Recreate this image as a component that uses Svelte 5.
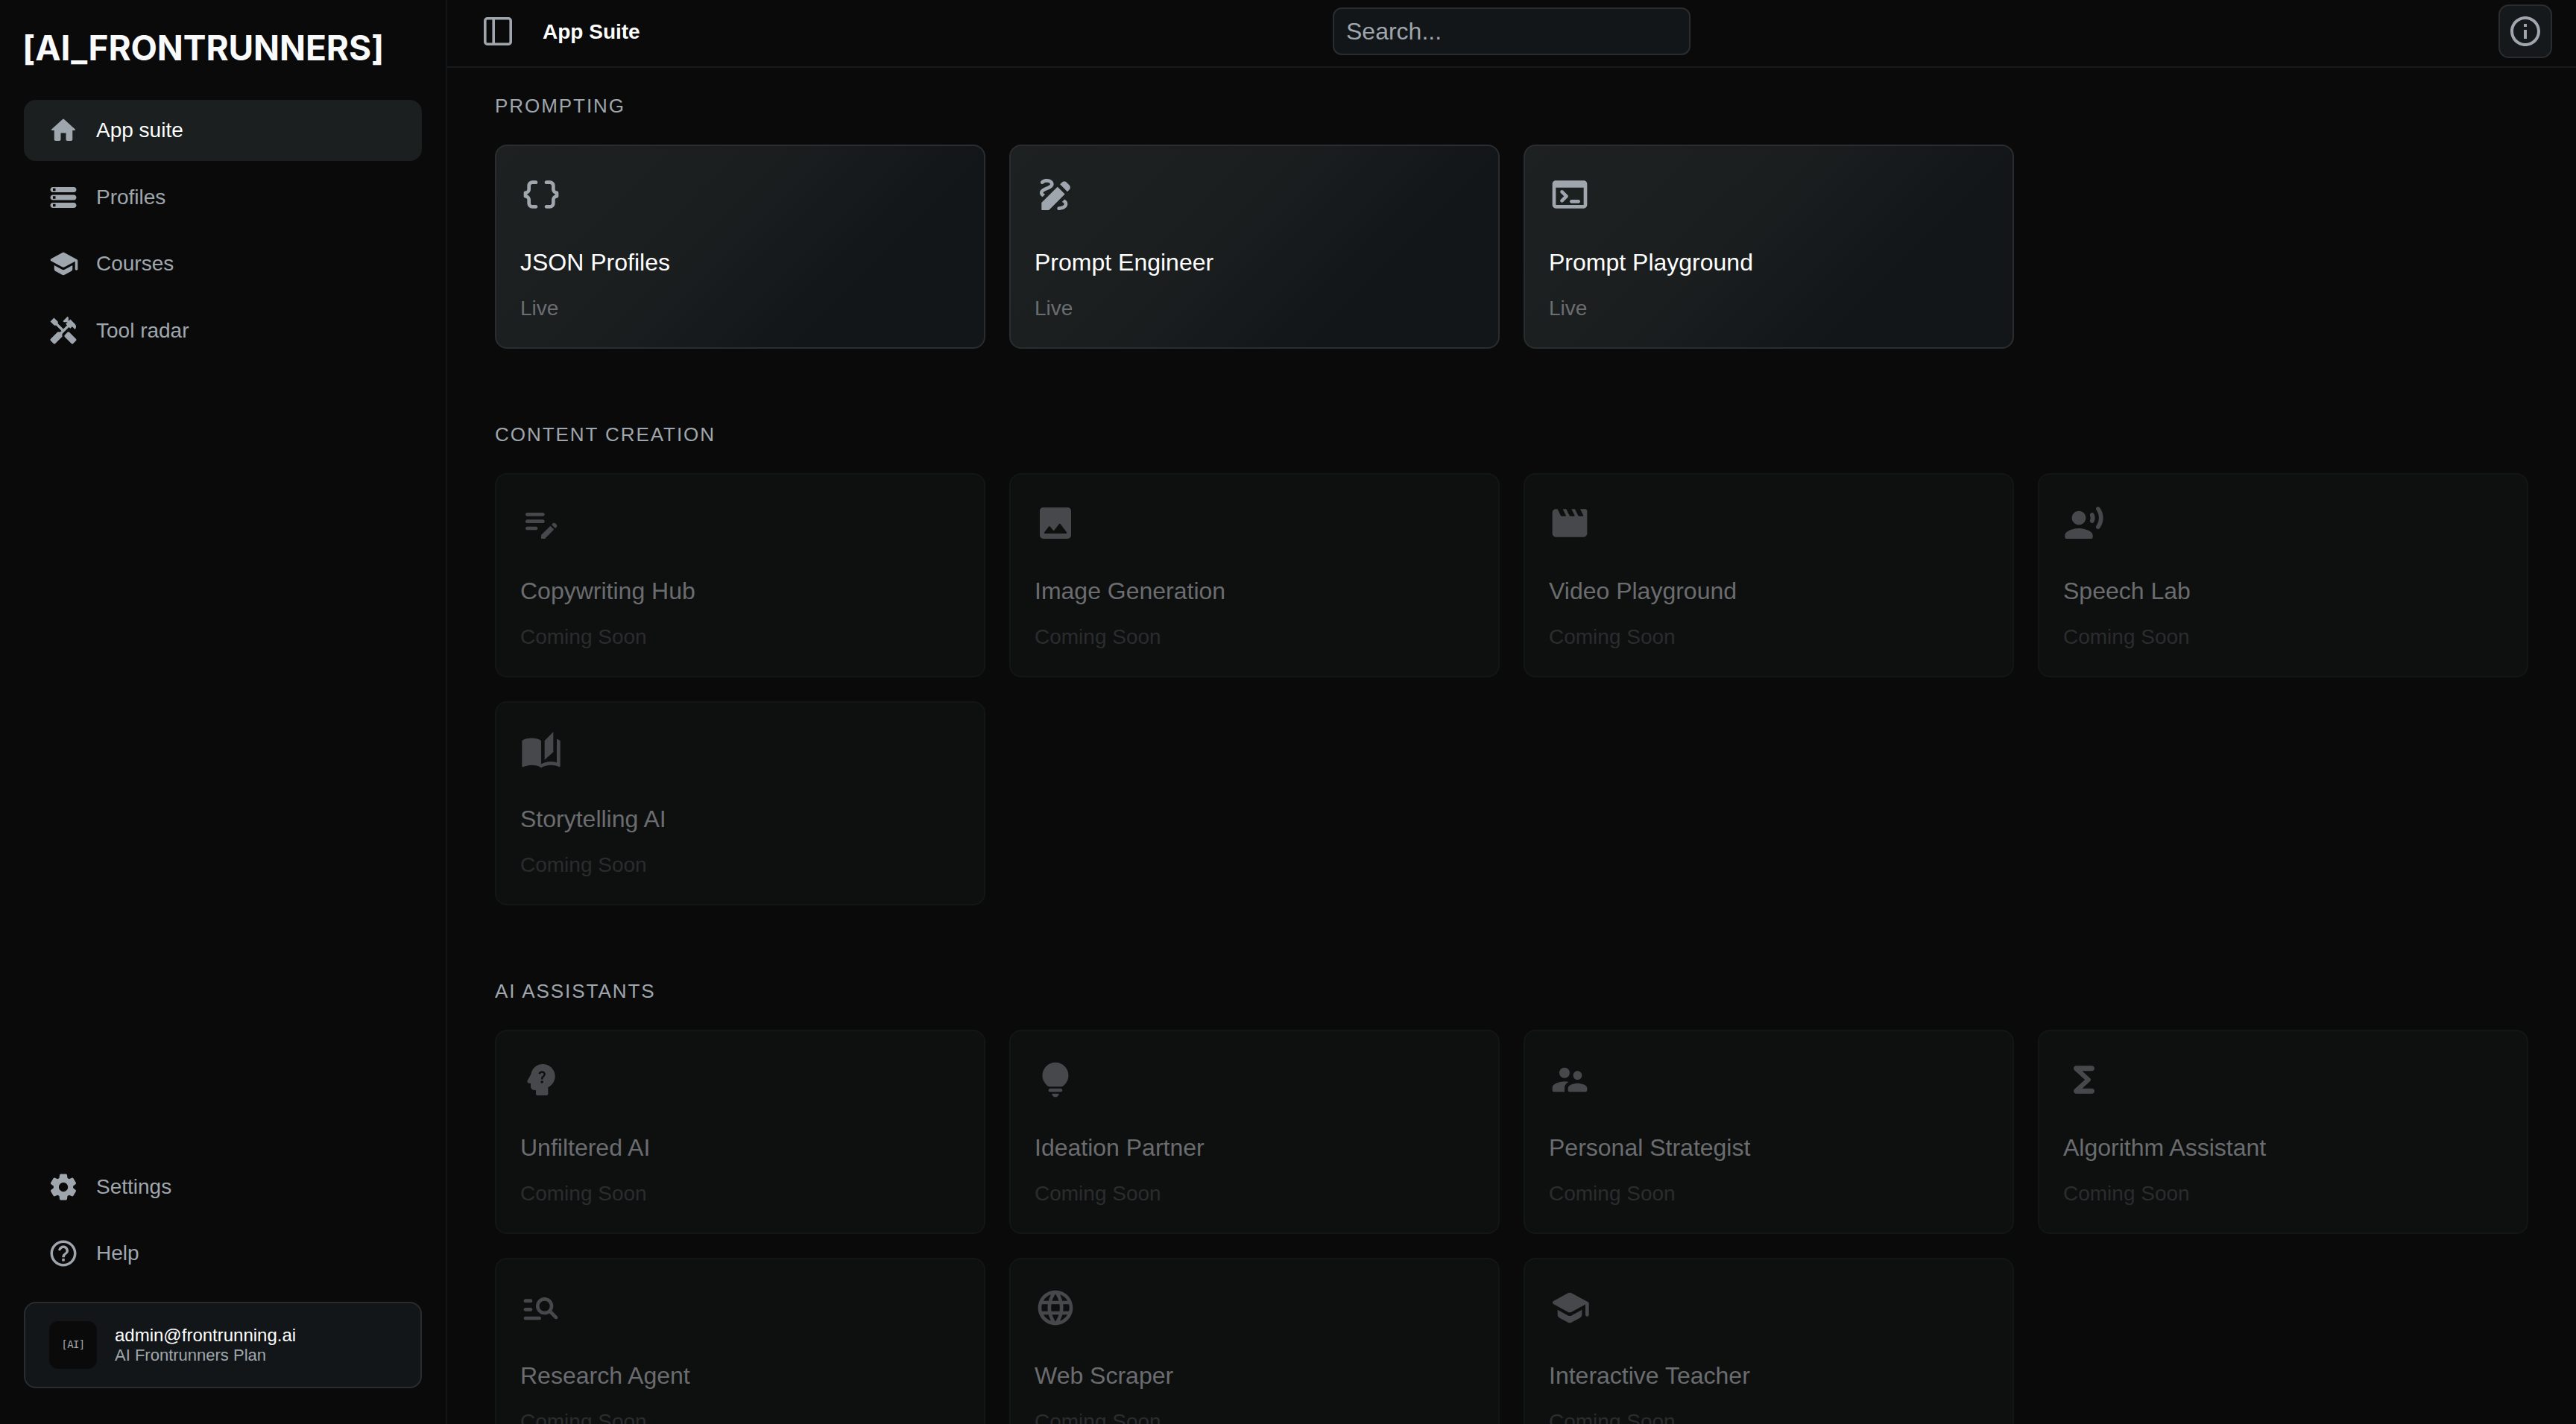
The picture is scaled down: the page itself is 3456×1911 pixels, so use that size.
<script>
  const icons = {
    home: "M10 19v-5h4v5c0 .55.45 1 1 1h3c.55 0 1-.45 1-1v-7h1.7c.46 0 .68-.57.33-.87L12.67 3.6c-.38-.34-.96-.34-1.34 0l-8.36 7.53c-.34.3-.13.87.33.87H5v7c0 .55.45 1 1 1h3c.55 0 1-.45 1-1z",
    storage:
      "M4 20h16c1.1 0 2-.9 2-2s-.9-2-2-2H4c-1.1 0-2 .9-2 2s.9 2 2 2zm0-3h2v2H4v-2zM2 6c0 1.1.9 2 2 2h16c1.1 0 2-.9 2-2s-.9-2-2-2H4c-1.1 0-2 .9-2 2zm4 1H4V5h2v2zm-2 7h16c1.1 0 2-.9 2-2s-.9-2-2-2H4c-1.1 0-2 .9-2 2s.9 2 2 2zm0-3h2v2H4v-2z",
    school:
      "M5 13.18v2.81c0 .73.4 1.41 1.04 1.76l5 2.73c.6.33 1.32.33 1.92 0l5-2.73c.64-.35 1.04-1.03 1.04-1.76v-2.81l-6.04 3.3c-.6.33-1.32.33-1.92 0L5 13.18zm6.04-9.66-8.43 4.6c-.69.38-.69 1.38 0 1.76l8.43 4.6c.6.33 1.32.33 1.92 0L21 10.09V16c0 .55.45 1 1 1s1-.45 1-1V9.59c0-.37-.2-.7-.52-.88l-9.52-5.19c-.6-.32-1.32-.32-1.92 0z",
    handyman:
      "m21.67 18.17-5.3-5.3h-.99l-2.54 2.54v.99l5.3 5.3c.39.39 1.02.39 1.41 0l2.12-2.12c.39-.38.39-1.02 0-1.41zM17.34 10.19l1.41-1.41 2.12 2.12c1.17-1.17 1.17-3.07 0-4.24l-3.54-3.54-1.41 1.41V1.71l-.7-.71-3.54 3.54.71.71h2.83l-1.41 1.41 1.06 1.06-2.89 2.89-4.13-4.13V5.06L4.83 2.04 2 4.87 5.03 7.9h1.41l4.13 4.13-.85.85H7.6l-5.3 5.3c-.39.39-.39 1.02 0 1.41l2.12 2.12c.39.39 1.02.39 1.41 0l5.3-5.3v-2.12l5.15-5.15 1.06 1.05z",
    settings:
      "M19.5 12c0-.23-.01-.45-.03-.68l1.86-1.41c.4-.3.51-.86.26-1.3l-1.87-3.23c-.25-.44-.79-.62-1.25-.42l-2.15.91c-.37-.26-.76-.49-1.17-.68l-.29-2.31c-.06-.5-.49-.88-.99-.88h-3.73c-.51 0-.94.38-1 .88l-.29 2.31c-.41.19-.8.42-1.17.68l-2.15-.91c-.46-.2-1-.02-1.25.42L2.41 8.62c-.25.44-.14.99.26 1.3l1.86 1.41c-.02.22-.03.44-.03.67s.01.45.03.68l-1.86 1.41c-.4.3-.51.86-.26 1.3l1.87 3.23c.25.44.79.62 1.25.42l2.15-.91c.37.26.76.49 1.17.68l.29 2.31c.06.5.49.88.99.88h3.73c.5 0 .93-.38.99-.88l.29-2.31c.41-.19.8-.42 1.17-.68l2.15.91c.46.2 1 .02 1.25-.42l1.87-3.23c.25-.44.14-.99-.26-1.3l-1.86-1.41c.03-.23.04-.45.04-.68zm-7.46 3.5c-1.93 0-3.5-1.57-3.5-3.5s1.57-3.5 3.5-3.5 3.5 1.57 3.5 3.5-1.57 3.5-3.5 3.5z",
    help: "M12 2C6.48 2 2 6.48 2 12s4.48 10 10 10 10-4.48 10-10S17.52 2 12 2zm0 18c-4.41 0-8-3.59-8-8s3.59-8 8-8 8 3.59 8 8-3.59 8-8 8zm-1-4h2v2h-2zm1.61-9.96c-2.06-.3-3.88.97-4.43 2.79-.18.58.26 1.17.87 1.17h.2c.41 0 .74-.29.88-.67.32-.89 1.27-1.5 2.3-1.28.95.2 1.65 1.13 1.57 2.1-.1 1.34-1.62 1.63-2.45 2.88 0 .01-.01.01-.01.02-.01.02-.02.03-.03.05-.09.15-.18.32-.25.5-.01.03-.03.05-.04.08-.01.02-.01.04-.02.07-.12.34-.2.75-.2 1.25h2c0-.42.11-.77.28-1.07.02-.03.03-.06.05-.09.08-.14.18-.27.28-.39.01-.01.02-.03.03-.04.1-.12.21-.23.33-.34.96-.91 2.26-1.65 1.99-3.56-.24-1.74-1.61-3.21-3.35-3.47z",
    info: "M11 7h2v2h-2zm0 4h2v6h-2zm1-9C6.48 2 2 6.48 2 12s4.48 10 10 10 10-4.48 10-10S17.52 2 12 2zm0 18c-4.41 0-8-3.59-8-8s3.59-8 8-8 8 3.59 8 8-3.59 8-8 8z",
    dataObject:
      "M4 7v2c0 .55-.45 1-1 1-.55 0-1 .45-1 1v2c0 .55.45 1 1 1s1 .45 1 1v2c0 1.66 1.34 3 3 3h2c.55 0 1-.45 1-1s-.45-1-1-1H7c-.55 0-1-.45-1-1v-2c0-1.3-.84-2.42-2-2.83v-.34C5.16 11.42 6 10.3 6 9V7c0-.55.45-1 1-1h2c.55 0 1-.45 1-1s-.45-1-1-1H7C5.34 4 4 5.34 4 7zm17 3c-.55 0-1-.45-1-1V7c0-1.66-1.34-3-3-3h-2c-.55 0-1 .45-1 1s.45 1 1 1h2c.55 0 1 .45 1 1v2c0 1.3.84 2.42 2 2.83v.34c-1.16.41-2 1.52-2 2.83v2c0 .55-.45 1-1 1h-2c-.55 0-1 .45-1 1s.45 1 1 1h2c1.66 0 3-1.34 3-3v-2c0-.55.45-1 1-1s1-.45 1-1v-2c0-.55-.45-1-1-1z",
    draw: "M18.85 10.39l1.06-1.06c.78-.78.78-2.05 0-2.83L18.5 5.09c-.78-.78-2.05-.78-2.83 0l-1.06 1.06 4.24 4.24zm-5.66-2.83L4 16.76V21h4.24l9.19-9.19-4.24-4.25zM19 17.5c0 2.19-2.54 3.5-5 3.5-.55 0-1-.45-1-1s.45-1 1-1c1.54 0 3-.73 3-1.5 0-.47-.48-.87-1.23-1.2l1.48-1.48c1.07.63 1.75 1.47 1.75 2.68zM4.58 13.35C3.61 12.79 3 12.06 3 11c0-1.8 1.89-2.63 3.56-3.36C7.59 7.18 9 6.56 9 6c0-.41-.78-1-2-1-1.26 0-1.8.61-1.83.64-.35.41-.98.46-1.4.12-.41-.34-.49-.95-.15-1.38C3.73 4.24 4.76 3 7 3s4 1.32 4 3c0 1.87-1.93 2.72-3.64 3.47C6.42 9.88 5 10.5 5 11c0 .31.43.6 1.07.86l-1.49 1.49z",
    terminal:
      "M20 4H4c-1.11 0-2 .9-2 2v12c0 1.1.89 2 2 2h16c1.1 0 2-.9 2-2V6c0-1.1-.89-2-2-2zm0 14H4V8h16v10zM12 16c0-.55.45-1 1-1h4c.55 0 1 .45 1 1s-.45 1-1 1h-4c-.55 0-1-.45-1-1zM6.8 9.7c.39-.39 1.02-.39 1.41 0l2.59 2.59c.39.39.39 1.03 0 1.42L8.21 16.3c-.39.39-1.02.39-1.41 0s-.39-1.02 0-1.41L8.69 13 6.8 11.11c-.39-.39-.39-1.02 0-1.41z",
    editNote:
      "M14 11c0 .55-.45 1-1 1H4c-.55 0-1-.45-1-1s.45-1 1-1h9c.55 0 1 .45 1 1zM3 7c0 .55.45 1 1 1h9c.55 0 1-.45 1-1s-.45-1-1-1H4c-.55 0-1 .45-1 1zm7 8c0-.55-.45-1-1-1H4c-.55 0-1 .45-1 1s.45 1 1 1h5c.55 0 1-.45 1-1zm8.01-2.13.71-.71c.39-.39 1.02-.39 1.41 0l.71.71c.39.39.39 1.02 0 1.41l-.71.71-2.12-2.12zm-.71.71-5.16 5.16c-.09.09-.14.21-.14.35v1.41c0 .28.22.5.5.5h1.41c.13 0 .26-.05.35-.15l5.16-5.16-2.12-2.11z",
    image:
      "M21 19V5c0-1.1-.9-2-2-2H5c-1.1 0-2 .9-2 2v14c0 1.1.9 2 2 2h14c1.1 0 2-.9 2-2zM8.9 13.98l2.1 2.53 3.1-3.99c.2-.26.6-.26.8.01l3.51 4.68c.25.33.01.8-.4.8H6.02c-.42 0-.65-.48-.39-.81L8.12 14c.19-.26.57-.27.78-.02z",
    movie:
      "m18 4 1.82 3.64c.08.16-.04.36-.22.36h-1.98c-.38 0-.73-.21-.89-.55L15 4h-2l1.82 3.64c.08.16-.04.36-.22.36h-1.98c-.38 0-.73-.21-.89-.55L10 4H8l1.82 3.64c.08.16-.04.36-.22.36H7.62c-.38 0-.73-.21-.9-.55L5 4H4c-1.1 0-2 .9-2 2v12c0 1.1.9 2 2 2h16c1.1 0 2-.9 2-2V5c0-.55-.45-1-1-1h-3z",
    voice:
      "M13 9c0 2.21-1.79 4-4 4s-4-1.79-4-4 1.79-4 4-4 4 1.79 4 4zM9 15c-2.67 0-8 1.34-8 4v1c0 .55.45 1 1 1h14c.55 0 1-.45 1-1v-1c0-2.66-5.33-4-8-4zm6.47-7.23c.32.79.32 1.67 0 2.46-.19.47-.11 1 .25 1.36l.03.03c.58.58 1.57.46 1.95-.27.76-1.45.76-3.15-.02-4.66-.38-.74-1.38-.88-1.97-.29l-.01.01c-.34.35-.42.89-.23 1.36zm3.71-4.88c-.4.4-.46 1.02-.13 1.48 1.97 2.74 1.96 6.41-.03 9.25-.32.45-.25 1.07.14 1.46l.03.03c.49.49 1.32.45 1.74-.1 2.75-3.54 2.76-8.37 0-12.02-.42-.55-1.26-.59-1.75-.1z",
    stories:
      "M19 1l-5 5v11l5-4.5V1zM1 6v14.65c0 .25.25.5.5.5.1 0 .15-.05.25-.05C3.1 20.45 5.05 20 6.5 20c1.95 0 4.05.4 5.5 1.5V6c-1.45-1.1-3.55-1.5-5.5-1.5S2.45 4.9 1 6zm22 13.5V6c-.6-.45-1.25-.75-2-1v13.5c-1.1-.35-2.3-.5-3.5-.5-1.7 0-4.15.65-5.5 1.5v2c1.35-.85 3.8-1.5 5.5-1.5 1.65 0 3.35.3 4.75 1.05.1.05.15.05.25.05.25 0 .5-.25.5-.5v-1.1z",
    psychology:
      "M19.94 9.06c-.43-3.27-3.23-5.86-6.53-6.05C13.27 3 13.14 3 13 3 9.47 3 6.57 5.61 6.08 9l-1.93 3.48c-.41.66.07 1.52.85 1.52h1v2c0 1.1.9 2 2 2h1v2c0 .55.45 1 1 1h5c.55 0 1-.45 1-1v-3.68c2.62-1.25 4.35-4.08 3.94-7.26zM12.5 14c-.41 0-.74-.31-.74-.73 0-.41.33-.74.74-.74.42 0 .73.33.73.74 0 .42-.31.73-.73.73zm1.76-4.32c-.44.65-.86.85-1.09 1.27-.09.17-.13.28-.13.82h-1.06c0-.29-.04-.75.18-1.16.28-.51.83-.81 1.14-1.26.33-.47.15-1.36-.8-1.36-.62 0-.92.47-1.05.86l-.96-.4c.27-.78.97-1.45 2.01-1.45.86 0 1.45.39 1.75.88.26.43.41 1.22.01 1.8z",
    lightbulb:
      "M12 22c1.1 0 2-.9 2-2h-4c0 1.1.9 2 2 2zm-3-3h6c.55 0 1-.45 1-1s-.45-1-1-1H9c-.55 0-1 .45-1 1s.45 1 1 1zm3-17C7.86 2 4.5 5.36 4.5 9.5c0 3.82 2.66 5.86 3.77 6.5h7.46c1.11-.64 3.77-2.68 3.77-6.5C19.5 5.36 16.14 2 12 2z",
    supervisor:
      "M16.5 12c1.38 0 2.49-1.12 2.49-2.5S17.88 7 16.5 7C15.12 7 14 8.12 14 9.5s1.12 2.5 2.5 2.5zM9 11c1.66 0 2.99-1.34 2.99-3S10.66 5 9 5C7.34 5 6 6.34 6 8s1.34 3 3 3zm7.5 3c-1.83 0-5.5.92-5.5 2.75V18c0 .55.45 1 1 1h9c.55 0 1-.45 1-1v-1.25c0-1.83-3.67-2.75-5.5-2.75zM9 13c-2.33 0-7 1.17-7 3.5V18c0 .55.45 1 1 1h6v-2.25c0-.85.33-2.34 2.37-3.47C10.5 13.1 9.66 13 9 13z",
    functions:
      "M16.5 4H7.47c-.81 0-1.47.66-1.47 1.47 0 .39.16.77.44 1.04L12.5 12l-6.06 5.49c-.28.28-.44.66-.44 1.04C6 19.34 6.66 20 7.47 20h9.03c.83 0 1.5-.67 1.5-1.5s-.67-1.5-1.5-1.5H11l4.59-4.3c.39-.39.39-1.02 0-1.4L11 7h5.5c.83 0 1.5-.67 1.5-1.5S17.33 4 16.5 4z",
    manageSearch:
      "M6 9H3c-.55 0-1-.45-1-1s.45-1 1-1h3c.55 0 1 .45 1 1s-.45 1-1 1zm0 3H3c-.55 0-1 .45-1 1s.45 1 1 1h3c.55 0 1-.45 1-1s-.45-1-1-1zm13.88 6.29-3.12-3.12c-.86.56-1.89.88-3 .82-2.37-.11-4.4-1.96-4.72-4.31-.44-3.35 2.45-6.18 5.83-5.61 1.95.33 3.57 1.85 4 3.78.33 1.46.01 2.82-.7 3.9l3.13 3.13c.39.39.39 1.02 0 1.41s-1.03.39-1.42 0zM17 11c0-1.65-1.35-3-3-3s-3 1.35-3 3 1.35 3 3 3 3-1.35 3-3zM3 19h8c.55 0 1-.45 1-1s-.45-1-1-1H3c-.55 0-1 .45-1 1s.45 1 1 1z",
    language:
      "M11.99 2C6.47 2 2 6.48 2 12s4.47 10 9.99 10C17.52 22 22 17.52 22 12S17.52 2 11.99 2zm6.93 6h-2.95c-.32-1.25-.78-2.45-1.38-3.56 1.84.63 3.37 1.91 4.33 3.56zM12 4.04c.83 1.2 1.48 2.53 1.91 3.96h-3.82c.43-1.43 1.08-2.76 1.91-3.96zM4.26 14C4.1 13.36 4 12.69 4 12s.1-1.36.26-2h3.38c-.08.66-.14 1.32-.14 2s.06 1.34.14 2H4.26zm.82 2h2.95c.32 1.25.78 2.45 1.38 3.56-1.84-.63-3.37-1.9-4.33-3.56zm2.95-8H5.08c.96-1.66 2.49-2.93 4.33-3.56C8.81 5.55 8.35 6.75 8.03 8zM12 19.96c-.83-1.2-1.48-2.53-1.91-3.96h3.82c-.43 1.43-1.08 2.76-1.91 3.96zM14.34 14H9.66c-.09-.66-.16-1.32-.16-2s.07-1.35.16-2h4.68c.09.65.16 1.32.16 2s-.07 1.34-.16 2zm.25 5.56c.6-1.11 1.06-2.31 1.38-3.56h2.95c-.96 1.65-2.49 2.93-4.33 3.56zM16.36 14c.08-.66.14-1.32.14-2s-.06-1.34-.14-2h3.38c.16.64.26 1.31.26 2s-.1 1.36-.26 2h-3.38z",
  };

  const mainNav = [
    { label: "App suite", icon: "home" },
    { label: "Profiles", icon: "storage" },
    { label: "Courses", icon: "school" },
    { label: "Tool radar", icon: "handyman" },
  ];

  const footerNav = [
    { label: "Settings", icon: "settings" },
    { label: "Help", icon: "help" },
  ];

  const sections = [
    {
      title: "Prompting",
      apps: [
        { name: "JSON Profiles", icon: "dataObject", live: true },
        { name: "Prompt Engineer", icon: "draw", live: true },
        { name: "Prompt Playground", icon: "terminal", live: true },
      ],
    },
    {
      title: "Content Creation",
      apps: [
        { name: "Copywriting Hub", icon: "editNote" },
        { name: "Image Generation", icon: "image" },
        { name: "Video Playground", icon: "movie" },
        { name: "Speech Lab", icon: "voice" },
        { name: "Storytelling AI", icon: "stories" },
      ],
    },
    {
      title: "AI Assistants",
      apps: [
        { name: "Unfiltered AI", icon: "psychology" },
        { name: "Ideation Partner", icon: "lightbulb" },
        { name: "Personal Strategist", icon: "supervisor" },
        { name: "Algorithm Assistant", icon: "functions" },
        { name: "Research Agent", icon: "manageSearch" },
        { name: "Web Scraper", icon: "language" },
        { name: "Interactive Teacher", icon: "school" },
      ],
    },
  ];

  let active = $state("App suite");
  let search = $state("");
</script>

{#snippet icon(name)}
  <svg class="icon" viewBox="0 0 24 24" aria-hidden="true">
    <path d={icons[name]} fill-rule="evenodd" />
  </svg>
{/snippet}

{#snippet navList(items)}
  <nav class="nav">
    {#each items as item}
      <button
        class="nav-item"
        class:active={active === item.label}
        onclick={() => (active = item.label)}
      >
        {@render icon(item.icon)}
        <span>{item.label}</span>
      </button>
    {/each}
  </nav>
{/snippet}

<div class="layout">
  <aside class="sidebar">
    <div class="logo">[AI_FRONTRUNNERS]</div>
    {@render navList(mainNav)}
    <div class="spacer"></div>
    {@render navList(footerNav)}
    <div class="account">
      <div class="avatar">[AI]</div>
      <div class="account-info">
        <div class="email">admin@frontrunning.ai</div>
        <div class="plan">AI Frontrunners Plan</div>
      </div>
    </div>
  </aside>

  <div class="content">
    <header class="topbar">
      <div class="topbar-left">
        <svg class="toggle" viewBox="0 0 38 38" aria-hidden="true">
          <rect x="1.8" y="1.8" width="34.4" height="34.4" rx="3" />
          <path d="M13.2 2v34" />
        </svg>
        <h1>App Suite</h1>
      </div>
      <input class="search" placeholder="Search..." bind:value={search} />
      <div class="topbar-right">
        <button class="info" aria-label="Info">
          {@render icon("info")}
        </button>
      </div>
    </header>

    <main>
      {#each sections as section}
        <section>
          <h2>{section.title}</h2>
          <div class="grid">
            {#each section.apps as app}
              <div class="card" class:live={app.live}>
                {@render icon(app.icon)}
                <div class="name">{app.name}</div>
                <div class="status">{app.live ? "Live" : "Coming Soon"}</div>
              </div>
            {/each}
          </div>
        </section>
      {/each}
    </main>
  </div>
</div>

<style>
  :global(body) {
    background: #0a0a0a;
    overflow: hidden;
  }
  .layout {
    display: flex;
    height: 1911px;
    overflow: hidden;
    background: #0a0a0a;
    color: #9fa6ad;
    font-family: "Liberation Sans", Arial, sans-serif;
    font-size: 28px;
    line-height: 1.5;
  }
  .layout * {
    box-sizing: border-box;
  }
  .icon {
    display: block;
    flex-shrink: 0;
    fill: currentColor;
  }
  button {
    font: inherit;
    color: inherit;
    cursor: pointer;
  }

  .sidebar {
    display: flex;
    flex-direction: column;
    flex-shrink: 0;
    width: 600px;
    padding: 37px 32px 48px;
    border-right: 2px solid #121619;
  }
  .logo {
    height: 54px;
    margin: 0 0 43px -2px;
    color: #f9fafb;
    font-family: Inter, sans-serif;
    font-size: 46px;
    font-weight: 700;
    line-height: 54px;
    letter-spacing: -0.1px;
    white-space: nowrap;
  }
  .nav {
    display: flex;
    flex-direction: column;
    gap: 7.5px;
  }
  .nav-item {
    display: flex;
    align-items: center;
    gap: 23px;
    height: 82px;
    padding: 0 32px;
    border: none;
    border-radius: 16px;
    background: none;
    text-align: left;
  }
  .nav-item .icon {
    width: 42px;
    height: 42px;
  }
  .nav-item.active {
    background: #1b1f20;
  }
  .nav-item.active span {
    color: #fff;
  }
  .spacer {
    flex: 1;
  }
  .account {
    display: flex;
    align-items: center;
    gap: 24px;
    height: 116px;
    margin-top: 24px;
    padding: 0 32px;
    border: 2px solid #2a2d30;
    border-radius: 16px;
    background: #121619;
  }
  .avatar {
    display: flex;
    align-items: center;
    justify-content: center;
    width: 64px;
    height: 64px;
    padding-bottom: 2px;
    border-radius: 12px;
    background: #0a0a0a;
    font-family: "DejaVu Sans Mono", monospace;
    font-size: 14px;
    letter-spacing: -0.6px;
  }
  .email {
    color: #fff;
    font-size: 24px;
    line-height: 28px;
  }
  .plan {
    font-size: 22px;
    line-height: 26px;
  }

  .content {
    display: flex;
    flex-direction: column;
    flex: 1;
    min-width: 0;
  }
  .topbar {
    display: flex;
    align-items: center;
    justify-content: space-between;
    flex-shrink: 0;
    height: 91px;
    padding: 0 32px 5px;
    border-bottom: 2px solid #181b1e;
  }
  .topbar-left,
  .topbar-right {
    display: flex;
    align-items: center;
    flex: 1;
  }
  .topbar-left {
    gap: 41px;
  }
  .topbar-right {
    justify-content: flex-end;
  }
  .toggle {
    width: 38px;
    height: 38px;
    margin-left: 17px;
    fill: none;
    stroke: currentColor;
    stroke-width: 3.6;
  }
  h1 {
    margin: 1px 0 0;
    color: #fff;
    font-size: 28px;
    font-weight: 700;
  }
  .search {
    width: 480px;
    height: 64px;
    padding: 0 16px;
    border: 2px solid #2a2d30;
    border-radius: 12px;
    outline: none;
    background: #121619;
    color: #fff;
    font: inherit;
    font-size: 32px;
  }
  .search::placeholder {
    color: #9fa6ad;
    opacity: 1;
  }
  .info {
    display: flex;
    align-items: center;
    justify-content: center;
    width: 72px;
    height: 72px;
    padding: 0;
    border: 2px solid #2a2d30;
    border-radius: 14px;
    background: #15191b;
  }
  .info .icon {
    width: 48px;
    height: 48px;
  }

  main {
    flex: 1;
    min-height: 0;
    padding: 32px 64px;
    overflow: hidden;
  }
  section {
    margin-bottom: 96px;
  }
  h2 {
    margin: 0 0 32px;
    font-size: 26px;
    font-weight: 400;
    line-height: 39px;
    letter-spacing: 1.95px;
    text-transform: uppercase;
  }
  .grid {
    display: grid;
    grid-template-columns: repeat(4, 1fr);
    gap: 32px;
  }
  .card {
    height: 274px;
    padding: 37px 32px 30px;
    border: 2px solid #121619;
    border-radius: 16px;
    background: #0e1010;
    color: #47484b;
  }
  .card .icon {
    width: 56px;
    height: 56px;
    margin-bottom: 39px;
  }
  .name {
    margin-bottom: 17px;
    color: #6b6c6f;
    font-size: 32px;
    line-height: 48px;
  }
  .status {
    color: #2a2c2e;
    line-height: 42px;
  }
  .card.live {
    border-color: #2a2d30;
    background: linear-gradient(135deg, #1d2122 0%, #1a1e1f 42%, #121619 72%);
    color: #9fa6ad;
  }
  .live .name {
    color: #fff;
  }
  .live .status {
    color: #6b6e70;
  }
</style>
